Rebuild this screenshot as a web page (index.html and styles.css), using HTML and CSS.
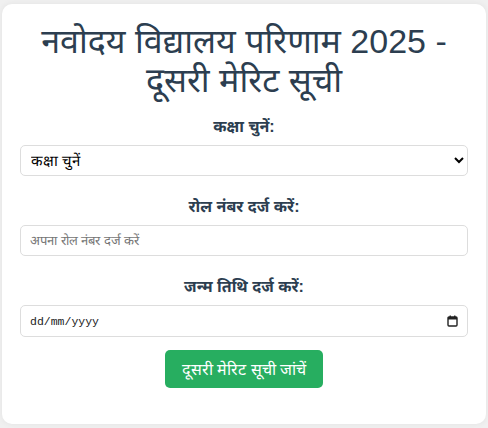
FILE: index.html
```html
<!DOCTYPE html>
<html lang="hi">
<head>
<meta charset="utf-8">
<title>नवोदय विद्यालय परिणाम 2025</title>
<link rel="stylesheet" href="styles.css">
</head>
<body>
<div class="card">
  <h1 class="title">नवोदय विद्यालय परिणाम 2025 - दूसरी मेरिट सूची</h1>
  <form class="form">
    <div class="group">
      <label class="label" for="cls">कक्षा चुनें:</label>
      <select class="field select" id="cls">
        <option>कक्षा चुनें</option>
        <option>कक्षा 6</option>
        <option>कक्षा 9</option>
      </select>
    </div>
    <div class="group">
      <label class="label" for="roll">रोल नंबर दर्ज करें:</label>
      <input class="field text" id="roll" type="text" placeholder="अपना रोल नंबर दर्ज करें">
    </div>
    <div class="group last">
      <label class="label" for="dob">जन्म तिथि दर्ज करें:</label>
      <div class="date-wrap">
        <input class="field date" id="dob" type="text" placeholder="dd/mm/yyyy">
        <svg class="cal" width="11" height="12" viewBox="0 0 11 12" aria-hidden="true">
          <rect x="1" y="2" width="9" height="9" rx="1" fill="none" stroke="#222" stroke-width="1.4"/>
          <rect x="1" y="2" width="9" height="2.5" fill="#222"/>
          <rect x="2.6" y="0.5" width="1.3" height="2" fill="#222"/>
          <rect x="7.1" y="0.5" width="1.3" height="2" fill="#222"/>
        </svg>
      </div>
    </div>
    <div class="actions">
      <button class="btn" type="button">दूसरी मेरिट सूची जांचें</button>
    </div>
  </form>
</div>
</body>
</html>
```
FILE: styles.css
```css
html, body {
  margin: 0;
  padding: 0;
}
body {
  background: #f0f0f0;
  font-family: "Liberation Sans", Arial, "Noto Sans", sans-serif;
  padding: 4px 2px;
}
.card {
  background: #ffffff;
  border-radius: 10px;
  box-shadow: 0 0 6px rgba(0, 0, 0, 0.06);
  padding: 18px 18px 35px;
  height: 420px;
  box-sizing: border-box;
}
.title {
  margin: 0 0 15px;
  text-align: center;
  color: #2c3e50;
  font-size: 34px;
  font-weight: normal;
  line-height: 39px;
}
.form {
  display: flex;
  flex-direction: column;
}
.group {
  display: flex;
  flex-direction: column;
  margin-bottom: 19px;
}
.group.last {
  margin-bottom: 13px;
}
.label {
  text-align: center;
  font-weight: bold;
  font-size: 16px;
  color: #2c3e50;
  margin-bottom: 8px;
}
.field {
  box-sizing: border-box;
  width: 100%;
  height: 31px;
  border: 1px solid #dddddd;
  border-radius: 5px;
  padding: 4px 10px;
  font-size: 13px;
  font-family: "Liberation Sans", Arial, sans-serif;
  background: #ffffff;
  color: #000000;
  outline: none;
}
.select {
  padding-left: 6px;
  font-size: 15px;
}
.text {
  padding-left: 9px;
}
.field::placeholder {
  color: #757575;
}
.date-wrap {
  position: relative;
}
.date {
  height: 32px;
  padding-left: 9px;
  font-family: "Liberation Mono", "DejaVu Sans Mono", monospace;
  font-size: 11.5px;
}
.date::placeholder {
  color: #1a1a1a;
}
.cal {
  position: absolute;
  right: 10px;
  top: 10px;
}
.actions {
  display: flex;
  justify-content: center;
}
.btn {
  background: #27ae60;
  color: #ffffff;
  border: none;
  border-radius: 5px;
  padding: 0 17px;
  height: 38px;
  font-size: 16px;
  font-family: "Liberation Sans", Arial, sans-serif;
}
```
